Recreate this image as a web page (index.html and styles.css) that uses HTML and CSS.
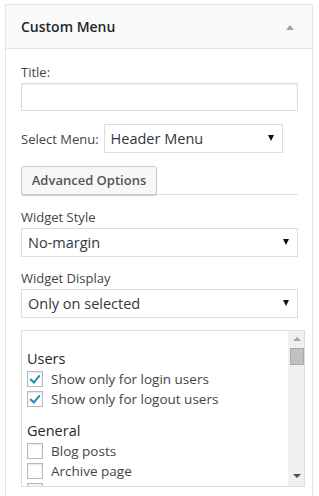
FILE: index.html
```html
<!DOCTYPE html>
<html lang="en">
<head>
  <meta charset="UTF-8">
  <title>Custom Menu widget</title>
  <link rel="stylesheet" href="styles.css">
</head>
<body>
  <div class="widget">
    <!-- Barra de título do widget -->
    <div class="widget-top">
      <h3>Custom Menu</h3>
      <span class="toggle"></span>
    </div>

    <div class="widget-inside">
      <div class="field">
        <label>Title:</label>
        <div class="input"></div>
      </div>

      <div class="field-inline">
        <label>Select Menu:</label>
        <div class="select select-small">
          <span>Header Menu</span>
          <span class="arrow"></span>
        </div>
      </div>

      <div class="advanced">
        <div class="button">Advanced Options</div>
        <div class="rule"></div>
      </div>

      <div class="field">
        <label>Widget Style</label>
        <div class="select">
          <span>No-margin</span>
          <span class="arrow"></span>
        </div>
      </div>

      <div class="field">
        <label>Widget Display</label>
        <div class="select">
          <span>Only on selected</span>
          <span class="arrow"></span>
        </div>
      </div>

      <!-- Lista de páginas com barra de rolagem -->
      <div class="listbox">
        <div class="list">
          <h4>Users</h4>
          <div class="check checked"><span class="box"></span>Show only for login users</div>
          <div class="check checked"><span class="box"></span>Show only for logout users</div>
          <h4 class="gap">General</h4>
          <div class="check"><span class="box"></span>Blog posts</div>
          <div class="check"><span class="box"></span>Archive page</div>
          <div class="check"><span class="box"></span>Search results</div>
        </div>
        <div class="scrollbar">
          <span class="up"></span>
          <span class="thumb"></span>
          <span class="down"></span>
        </div>
      </div>
    </div>
  </div>
</body>
</html>
```

FILE: styles.css
```css
* { box-sizing: border-box; margin: 0; padding: 0; }

body {
  font-family: 'Open Sans', sans-serif;
  font-size: 13px;
  color: #444;
  background: #fff;
  padding: 4px 0 0 5px;
  overflow: hidden;
}

/* Caixa do widget */
.widget {
  width: 308px;
  height: 520px;
  border: 1px solid #e5e5e5;
  background: #fff;
}

.widget-top {
  display: flex;
  align-items: center;
  justify-content: space-between;
  height: 44px;
  padding: 0 18px 0 15px;
  background: #fafafa;
  border-bottom: 1px solid #e5e5e5;
}

.widget-top h3 {
  font-size: 14px;
  font-weight: 600;
  color: #23282d;
}

.toggle {
  width: 0;
  height: 0;
  border-left: 4px solid transparent;
  border-right: 4px solid transparent;
  border-bottom: 5px solid #a0a5aa;
  margin-top: 1px;
}

.widget-inside {
  padding: 14px 14px 0 15px;
}

label {
  display: block;
  line-height: 18px;
}

.field label {
  margin-bottom: 2px;
}

.field {
  margin-bottom: 12px;
}

.input {
  height: 28px;
  border: 1px solid #ddd;
  box-shadow: inset 0 1px 2px rgba(0, 0, 0, 0.07);
}

.field-inline {
  display: flex;
  align-items: center;
  gap: 5px;
  margin-top: 13px;
}

.select {
  display: flex;
  align-items: center;
  justify-content: space-between;
  height: 29px;
  padding: 0 8px 0 6px;
  border: 1px solid #ddd;
  font-size: 14.5px;
  color: #32373c;
  background: #fff;
}

.select-small {
  width: 179px;
}

.arrow {
  width: 0;
  height: 0;
  border-left: 3.5px solid transparent;
  border-right: 3.5px solid transparent;
  border-top: 6px solid #111;
  margin-top: -1px;
}

/* Botão e linha divisória */
.advanced {
  display: flex;
  align-items: flex-end;
  margin-top: 13px;
  margin-bottom: 13px;
}

.button {
  width: 136px;
  height: 29px;
  line-height: 26px;
  text-align: center;
  font-weight: 600;
  color: #555;
  background: #f7f7f7;
  border: 1px solid #ccc;
  border-radius: 3px;
  box-shadow: 0 1px 0 #ccc;
}

.rule {
  flex: 1;
  border-bottom: 1px solid #ddd;
}

/* Lista com checkboxes */
.listbox {
  display: flex;
  width: 284px;
  height: 157px;
  border: 1px solid #ddd;
  overflow: hidden;
}

.list {
  flex: 1;
  padding: 18px 0 0 5px;
  font-size: 13.5px;
  color: #444;
}

.list h4 {
  font-size: 14.5px;
  font-weight: 400;
  color: #23282d;
  line-height: 19px;
  margin-bottom: 1px;
}

.list h4.gap {
  margin-top: 12px;
}

.check {
  display: flex;
  align-items: center;
  height: 20px;
}

.box {
  position: relative;
  width: 16px;
  height: 16px;
  border: 1px solid #b4b9be;
  background: #fff;
  box-shadow: inset 0 1px 2px rgba(0, 0, 0, 0.1);
  margin: 0 8px 0 0;
}

.checked .box::after {
  content: "";
  position: absolute;
  left: 4px;
  top: 1px;
  width: 4px;
  height: 8px;
  border-right: 2px solid #1e8cbe;
  border-bottom: 2px solid #1e8cbe;
  transform: rotate(40deg);
}

.scrollbar {
  position: relative;
  width: 16px;
  background: #f0f0f0;
  border-left: 1px solid #f0f0f0;
}

.up, .down {
  position: absolute;
  left: 4px;
  width: 0;
  height: 0;
  border-left: 4px solid transparent;
  border-right: 4px solid transparent;
}

.up {
  top: 6px;
  border-bottom: 4px solid #a3a3a3;
}

.down {
  bottom: 8px;
  border-top: 4px solid #505050;
}

.thumb {
  position: absolute;
  top: 17px;
  left: 1px;
  width: 14px;
  height: 17px;
  background: #c1c1c1;
  border: 1px solid #a9a9a9;
}
```
